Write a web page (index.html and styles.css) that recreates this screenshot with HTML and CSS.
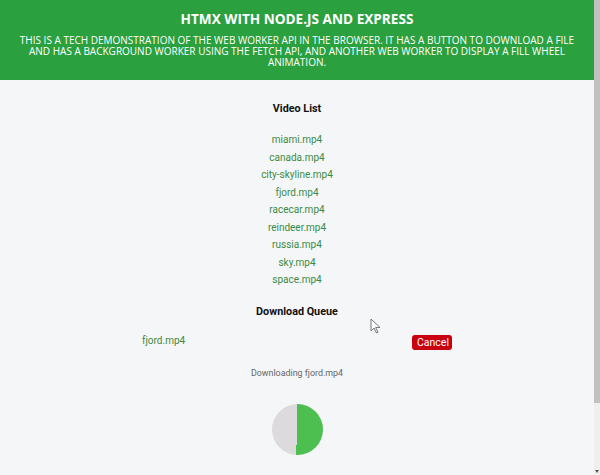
FILE: index.html
```html
<!DOCTYPE html>
<html lang="en">
<head>
<meta charset="utf-8">
<title>HTMX with Node.js and Express</title>
<link rel="stylesheet" href="styles.css">
</head>
<body>
<header class="hero">
  <h1 class="hero-title">HTMX WITH NODE.JS AND EXPRESS</h1>
  <p class="hero-text">This is a tech demonstration of the web worker API in the browser. It has a button to download a file and has a background worker using the fetch API, and another web worker to display a fill wheel animation.</p>
</header>
<main class="content">
  <h2 class="section-title">Video List</h2>
  <ul class="video-list">
    <li><a class="video-link" href="#">miami.mp4</a></li>
    <li><a class="video-link" href="#">canada.mp4</a></li>
    <li><a class="video-link" href="#">city-skyline.mp4</a></li>
    <li><a class="video-link" href="#">fjord.mp4</a></li>
    <li><a class="video-link" href="#">racecar.mp4</a></li>
    <li><a class="video-link" href="#">reindeer.mp4</a></li>
    <li><a class="video-link" href="#">russia.mp4</a></li>
    <li><a class="video-link" href="#">sky.mp4</a></li>
    <li><a class="video-link" href="#">space.mp4</a></li>
  </ul>
  <h2 class="section-title queue-title">Download Queue</h2>
  <div class="queue-row">
    <span class="queue-name">fjord.mp4</span>
    <button class="cancel-btn">Cancel</button>
  </div>
  <p class="status">Downloading fjord.mp4</p>
  <div class="pie"></div>
</main>
<div class="scrollbar"><div class="scroll-thumb"></div><div class="scroll-arrow"></div></div>
<svg class="cursor" width="12" height="16" viewBox="0 0 12 16"><path d="M1 1 L1 13 L4 10 L6.5 15 L8 14.3 L5.6 9.5 L10 9.5 Z" fill="#fff" stroke="#777" stroke-width="1"/></svg>
</body>
</html>
```
FILE: styles.css
```css
html { background: #f5f6f8; }
body {
  margin: 0 6px 0 0;
  font-family: Roboto, "Liberation Sans", sans-serif;
  background: #f5f6f8;
  position: relative;
}
.hero {
  background: #2ba03f;
  color: #fff;
  text-align: center;
  padding: 10px 12px 12px;
  font-family: "Open Sans", "Liberation Sans", sans-serif;
}
.hero-title {
  margin: 0;
  font-size: 13.6px;
  line-height: 18px;
  font-weight: 700;
}
.hero-text {
  margin: 7px 0 0;
  font-size: 10px;
  line-height: 11px;
  text-transform: uppercase;
}
.content {
  display: flex;
  flex-direction: column;
  align-items: center;
  padding: 21px 0 100px;
}
.section-title {
  margin: 0;
  font-size: 10.8px;
  line-height: 16px;
  font-weight: 700;
  color: #111;
}
.video-list {
  list-style: none;
  margin: 14px 0 0;
  padding: 0;
  text-align: center;
}
.video-list li {
  font-size: 10px;
  line-height: 17.5px;
}
.video-link {
  color: #3a8a43;
  text-decoration: none;
}
.queue-title { margin-top: 15px; }
.queue-row {
  margin-top: 15px;
  width: 310px;
  display: flex;
  justify-content: space-between;
  align-items: center;
}
.queue-name {
  color: #3a8a43;
  font-size: 10px;
  line-height: 16px;
  margin-top: -3px;
}
.cancel-btn {
  background: #c9000f;
  color: #fff;
  border: 0;
  border-radius: 3px;
  font-family: Roboto, "Liberation Sans", sans-serif;
  font-size: 10.5px;
  line-height: 15px;
  padding: 0 5px;
  height: 15px;
  width: 40px;
}
.status {
  margin: 16px 0 0;
  font-size: 8.9px;
  line-height: 14px;
  color: #666;
}
.pie {
  margin-top: 24px;
  width: 51px;
  height: 51px;
  border-radius: 50%;
  background: conic-gradient(#4cbf50 0 51%, #dcdadd 0);
}
.scrollbar {
  position: fixed;
  top: 0;
  right: 0;
  width: 6px;
  height: 475px;
  background: #efefef;
}
.scroll-thumb {
  height: 403px;
  background: #c1c1c1;
}
.scroll-arrow {
  position: absolute;
  left: 1px;
  bottom: 2px;
  width: 0;
  height: 0;
  border-left: 2px solid transparent;
  border-right: 2px solid transparent;
  border-top: 3px solid #555;
}
.cursor {
  position: absolute;
  left: 370px;
  top: 318px;
}
```
